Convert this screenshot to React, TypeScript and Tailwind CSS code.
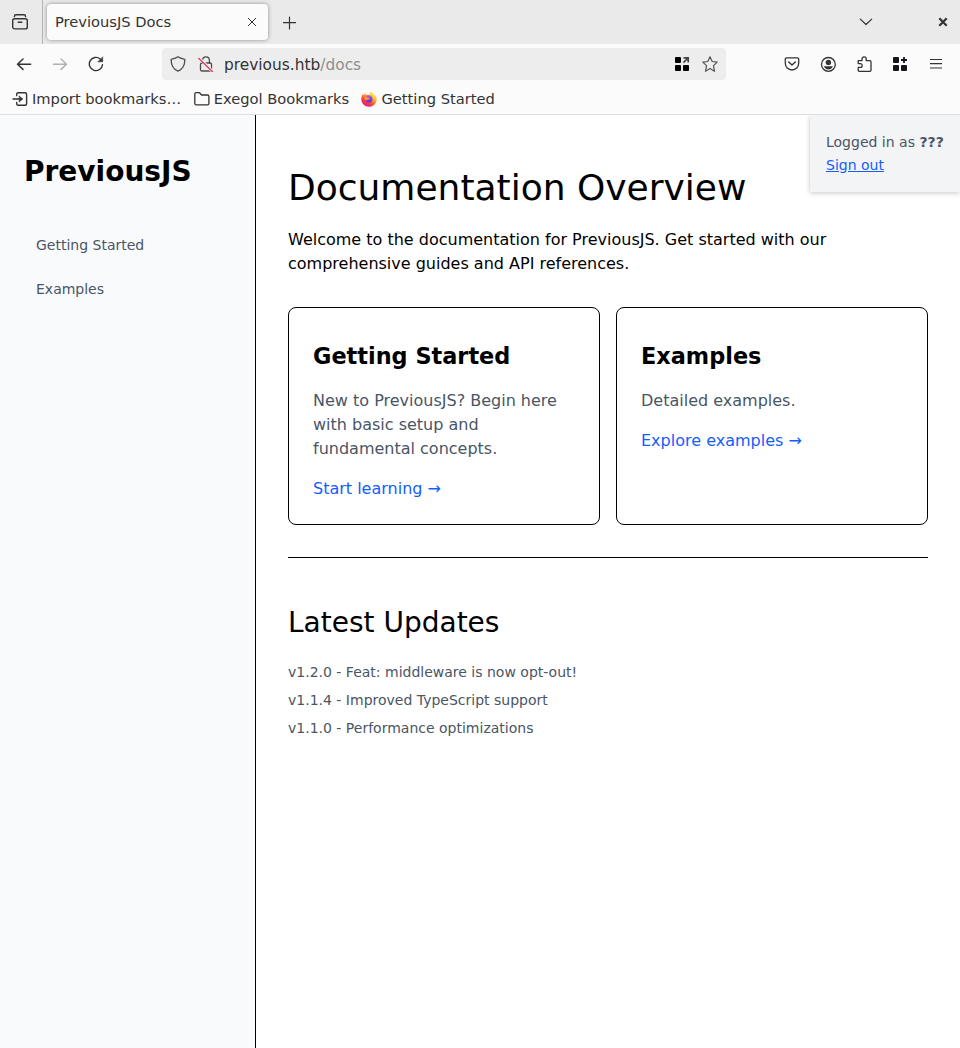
import type { ReactNode } from "react";

function Icon({ children, className = "", size = 16 }: { children: ReactNode; className?: string; size?: number }) {
  return (
    <svg
      width={size}
      height={size}
      viewBox="0 0 16 16"
      fill="none"
      stroke="currentColor"
      strokeWidth="1.3"
      strokeLinecap="round"
      strokeLinejoin="round"
      className={`block shrink-0 ${className}`}
    >
      {children}
    </svg>
  );
}

function TabBar() {
  return (
    <div className="flex h-11 shrink-0 bg-[#eaeaea]">
      <div className="flex w-[43px] items-center border-r border-[#b4b4b4] pl-3">
        <Icon>
          <rect x="0.7" y="4.7" width="14.6" height="10.2" rx="2" strokeWidth="1.4" />
          <path d="M2.4 2.6C2.5 1.4 3.1.8 4 .8h8c.9 0 1.5.6 1.6 1.8" strokeWidth="1.4" />
          <path d="M6.2 8.2h3.6" strokeWidth="1.4" />
        </Icon>
      </div>
      <div className="mt-1 ml-1 flex h-9 w-[221px] items-center justify-between rounded bg-[#fbfbfb] px-2 shadow-[0_0_4px_rgba(0,0,0,0.4)]">
        <span className="text-[14.667px] leading-5 whitespace-nowrap">PreviousJS Docs</span>
        <Icon>
          <path d="m4.300 4.300 7.400 7.400m0-7.400-7.400 7.400" strokeWidth="1" />
        </Icon>
      </div>
      <div className="flex flex-1 items-center justify-between pr-[9px] pl-[13px]">
        <Icon>
          <path d="M8.500 3v12M2.500 8.700h12" strokeWidth="1.2" />
        </Icon>
        <div className="flex items-center gap-[61px]">
          <Icon>
            <path d="m2.300 5.100 5.700 5.400 5.700-5.400" strokeWidth="1.2" />
          </Icon>
          <Icon>
            <path d="m4.300 4.300 7.400 7.400m0-7.400-7.400 7.400" strokeWidth="2.2" strokeLinecap="butt" />
          </Icon>
        </div>
      </div>
    </div>
  );
}

function GridIcon({ plus = false }: { plus?: boolean }) {
  return (
    <Icon className={plus ? "text-[#15141a]" : "text-black"}>
      <g fill="currentColor" stroke="none">
        <rect x="1" y="1" width="6" height="6" rx="1" />
        <rect x="1" y="9" width="6" height="6" rx="1" />
        <rect x="9" y="9" width="6" height="6" rx="1" />
      </g>
      {plus ? (
        <path d="M12 1v6M9 4h6" strokeWidth="1.8" strokeLinecap="butt" />
      ) : (
        <path d="M9.4 6.6 14 2M9.5 1.8h4.700v4.700" stroke="#444" strokeWidth="1.7" strokeLinecap="butt" strokeLinejoin="miter" />
      )}
    </Icon>
  );
}

function NavBar() {
  return (
    <div className="flex h-10 shrink-0 items-center px-4">
      <div className="flex gap-5">
        <Icon>
          <path d="M14.6 8.2H1.6M7 3 1.500 8.2 7 13.400" strokeWidth="1.5" />
        </Icon>
        <Icon className="text-[#b2b2b2]">
          <path d="M1.4 8.2h13M9 3l5.500 5.2L9 13.400" strokeWidth="1.5" />
        </Icon>
        <Icon>
          <path d="M14.5 8.700A6.600 6.600 0 1 1 12.2 3" strokeWidth="1.4" />
          <path d="M14.7 1.2v4.6h-4.6z" fill="currentColor" strokeWidth="0.6" />
        </Icon>
      </div>
      <div className="ml-[58px] flex h-8 w-[564px] items-center rounded bg-[#ededed] px-2">
        <Icon className="text-[#4d4d4d]">
          <path d="M8 .8c1.8 1.500 4.200 2 6.800 2.500.2 5.400-1.700 9.700-6.800 11.900C2.900 13 1 8.700 1.200 3.300 3.800 2.800 6.200 2.300 8 .8z" />
        </Icon>
        <Icon className="ml-3 text-[#4d4d4d]">
          <path d="M4.600 7V4.300a3.400 3.400 0 0 1 6.800 0V7" />
          <rect x="2.500" y="7" width="11" height="8" rx="1.300" />
          <path d="m1 2 13.500 13.500" stroke="#ededed" strokeWidth="3" />
          <path d="m.8 2.400 13.600 13.200" stroke="#e22850" strokeWidth="1.300" />
        </Icon>
        <span className="ml-2.5 flex-1 pt-0.5 text-[15.4px] leading-6">
          previous.htb<span className="text-[#8f8f8f]">/docs</span>
        </span>
        <GridIcon />
        <Icon className="ml-3 text-[#555]">
          <path d="m8 .8 2.200 4.700 5 .6-3.700 3.500 1 5.700L8 12.600l-4.500 2.700 1-5.700L.8 6.100l5-.6z" strokeWidth="1.200" />
        </Icon>
      </div>
      <div className="ml-[58px] flex gap-5">
        <Icon>
          <path d="M2.500 1.900h11c.7 0 1.200.5 1.200 1.200v4.200a6.700 6.700 0 0 1-13.400 0V3.100c0-.7.500-1.200 1.200-1.200z" />
          <path d="M4.700 6 8 9.100 11.300 6" strokeWidth="1.400" />
        </Icon>
        <Icon>
          <circle cx="8.400" cy="8.400" r="6.900" />
          <circle cx="8.400" cy="6.400" r="2.700" fill="currentColor" stroke="none" />
          <path d="M3.900 10.300h9c-.6 2-2.300 3.100-4.500 3.100s-3.900-1.100-4.500-3.100z" fill="currentColor" stroke="none" />
        </Icon>
        <Icon>
          <path d="M2.200 4.600H6V3a2.100 2.100 0 0 1 4.200 0v1.600h3.500c.8 0 1.300.4 1.300 1.200v8.300c0 .8-.5 1.200-1.300 1.200H3.400c-.8 0-1.200-.4-1.200-1.200v-2.700h2.100a1.900 1.900 0 0 0 0-3.800H2.200z" />
        </Icon>
        <GridIcon plus />
        <Icon>
          <path d="M2 3.500h12M2 7.700h12M2 12h12" strokeWidth="1.200" strokeLinecap="butt" />
        </Icon>
      </div>
    </div>
  );
}

function FirefoxIcon() {
  return (
    <svg width="16" height="16" viewBox="0 0 16 16" className="block shrink-0">
      <defs>
        <linearGradient id="flame" x1="0.8" y1="0.1" x2="0.25" y2="0.95">
          <stop offset="0" stopColor="#fff44f" />
          <stop offset="0.35" stopColor="#ffb52e" />
          <stop offset="0.65" stopColor="#ff4b3a" />
          <stop offset="1" stopColor="#e31587" />
        </linearGradient>
        <linearGradient id="globe" x1="0.5" y1="0" x2="0.5" y2="1">
          <stop offset="0" stopColor="#a85be8" />
          <stop offset="1" stopColor="#5b35cf" />
        </linearGradient>
      </defs>
      <path
        d="M10.600.3c.2 1.300 1.100 2 2 2.800.4.400.7.900.8 1.400.4-.1.600-.4.700-.8C15.300 5.300 15.800 6.900 15.700 8.500 15.500 12.700 12.200 15.800 8 15.800S.3 12.500.3 8.300c0-2 .5-3.900 1.500-5.300l.4 1.200C2.700 3.200 3.500 2.400 4.300 1.900c-.1.900.3 1.500.8 1.900 1-.2 2-.2 3.100.2.200-1.700 1.200-2.900 2.400-3.700z"
        fill="url(#flame)"
      />
      <path
        d="M5.200 4.700C8 3.600 11.800 5 11.600 8.500c-.1 2-1.600 3.300-3.600 3.300-2.100 0-3.600-1.400-3.600-3.200 1.100.9 2.500.7 3.300-.1L9 7.500c-.7-.4-1.600-.3-2.400-.5-.7-.2-1.300-1.100-1.400-2.300z"
        fill="url(#globe)"
      />
      <path d="M3.700 6.200c.8-.4 1.900-.3 2.700.2.600.3 1.300.2 1.800.4.500.3-.2.900-.9 1.200-.8.400-1.200.9-2 .9-.8.100-1.400-.1-1.700-.6z" fill="#ff9a26" />
    </svg>
  );
}

function BookmarksBar() {
  return (
    <div className="flex h-[30px] shrink-0 items-center pl-3 text-[14.667px] leading-5 whitespace-nowrap">
      <div className="flex items-center gap-1">
        <Icon>
          <path d="M4.700 4.500V3.200c0-.9.600-1.500 1.500-1.500h6.900c.9 0 1.500.6 1.500 1.500v9.600c0 .9-.6 1.500-1.500 1.500H6.200c-.9 0-1.500-.6-1.500-1.500v-1.300M1 8h9" strokeWidth="1.400" />
          <path d="M7.500 5.200 10.500 8l-3 2.800z" fill="currentColor" strokeWidth="0.8" />
        </Icon>
        <span>Import bookmarks…</span>
      </div>
      <div className="ml-[12.6px] flex items-center gap-1">
        <Icon>
          <path d="M.8 12.400V3c0-.8.600-1.300 1.400-1.300h3.300L7.600 4h5.900c.8 0 1.400.6 1.400 1.400v7c0 .8-.6 1.400-1.400 1.400H2.200c-.8 0-1.400-.6-1.400-1.400z" />
        </Icon>
        <span>Exegol Bookmarks</span>
      </div>
      <div className="ml-[12.4px] flex items-center gap-1">
        <FirefoxIcon />
        <span>Getting Started</span>
      </div>
    </div>
  );
}

function Sidebar() {
  return (
    <aside className="w-64 shrink-0 border-r border-black bg-gray-50 px-6 pt-[37px]">
      <h2 className="text-[28px] leading-10 font-bold text-black">PreviousJS</h2>
      <nav className="mt-[35px] flex flex-col gap-2 text-sm text-gray-600">
        <a href="#start" className="px-3 py-2">Getting Started</a>
        <a href="#examples" className="px-3 py-2">Examples</a>
      </nav>
    </aside>
  );
}

function Card({ title, text, link }: { title: string; text: string; link: string }) {
  return (
    <section className="flex h-[218px] flex-1 flex-col rounded-lg border border-black px-6 pt-8">
      <h3 className="text-[22.4px] leading-8 font-bold">{title}</h3>
      <p className="mt-[17px] text-gray-600">{text}</p>
      <a href="#more" className="mt-4 text-[#155dfc]">{link}</a>
    </section>
  );
}

const updates = [
  "v1.2.0 - Feat: middleware is now opt-out!",
  "v1.1.4 - Improved TypeScript support",
  "v1.1.0 - Performance optimizations",
];

export default function App() {
  return (
    <div className="flex h-[1048px] w-[960px] flex-col overflow-hidden bg-white font-['DejaVu_Sans',sans-serif]">
      <header className="flex h-[115px] shrink-0 flex-col border-b border-[#dedede] bg-[#fbfbfb] text-[#333]">
        <TabBar />
        <NavBar />
        <BookmarksBar />
      </header>
      <div className="relative flex flex-1 overflow-hidden">
        <Sidebar />
        <main className="flex-1 px-8 pt-[53px] text-base leading-6 text-black">
          <h1 className="text-[36px] leading-10">Documentation Overview</h1>
          <p className="mt-5">
            Welcome to the documentation for PreviousJS. Get started with our comprehensive guides and API references.
          </p>
          <div className="mt-[31px] flex gap-4">
            <Card
              title="Getting Started"
              text="New to PreviousJS? Begin here with basic setup and fundamental concepts."
              link="Start learning →"
            />
            <Card title="Examples" text="Detailed examples." link="Explore examples →" />
          </div>
          <hr className="mt-8 border-black" />
          <h2 className="mt-[45px] text-[28px] leading-10">Latest Updates</h2>
          <ul className="mt-[19px] flex flex-col gap-2 text-sm text-gray-600">
            {updates.map((update) => (
              <li key={update}>{update}</li>
            ))}
          </ul>
        </main>
        <div className="absolute top-0 right-0 h-[77px] w-[150px] bg-gray-100 p-4 text-sm leading-[22.5px] whitespace-nowrap text-gray-600 shadow-[0_1px_5px_rgba(0,0,0,0.22)]">
          <p>Logged in as <b>???</b></p>
          <a href="#signout" className="text-[#155dfc] underline">Sign out</a>
        </div>
      </div>
    </div>
  );
}
